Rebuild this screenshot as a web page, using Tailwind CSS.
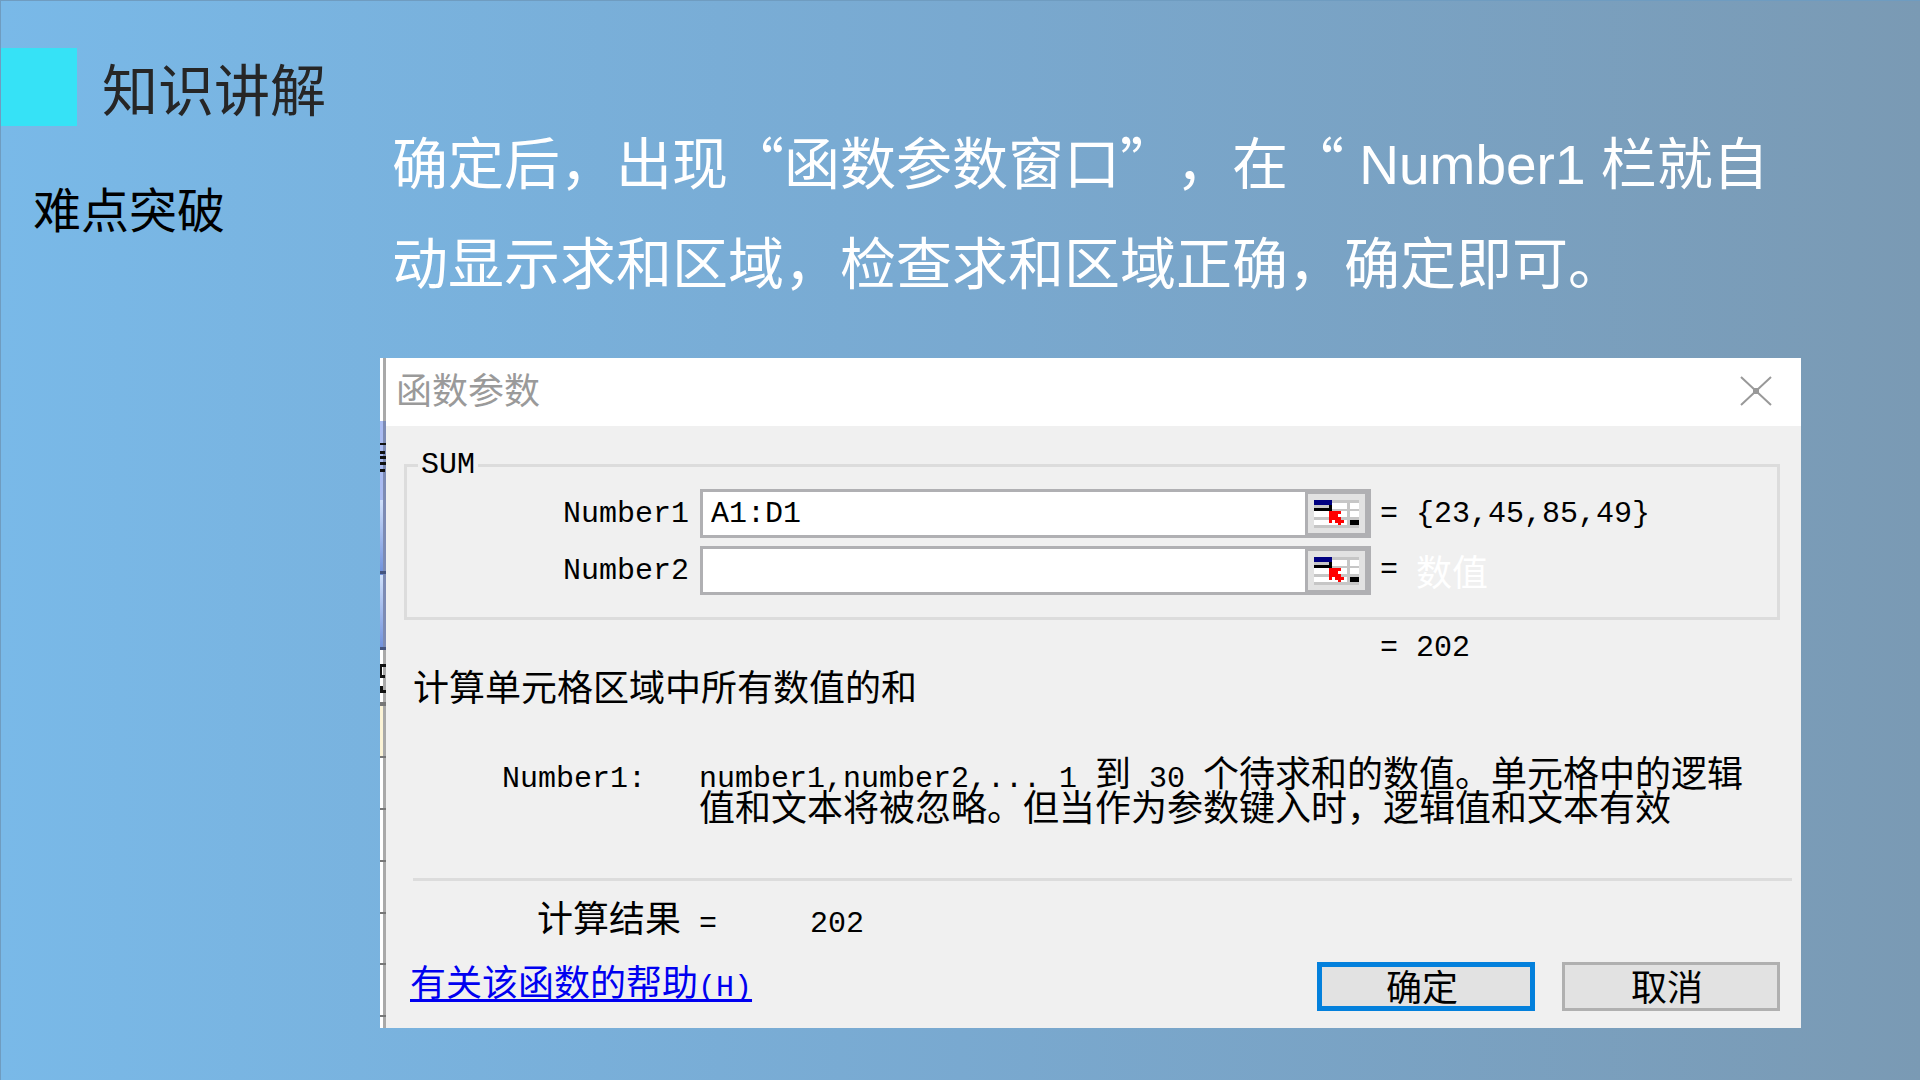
<!DOCTYPE html>
<html lang="zh-CN">
<head>
    <meta charset="UTF-8">
    <meta name="viewport" content="width=device-width, initial-scale=1.0">
    <title>知识讲解 - 难点突破</title>
    <script src="https://cdn.jsdelivr.net/npm/@tailwindcss/browser@4"></script>
</head>
<body class="font-['Noto_Sans_CJK_SC',sans-serif]">
    <main class="min-h-screen flex bg-linear-to-r from-[#79b9e8] via-[#79a9d0] to-[#7a9ab4] border-t border-l border-[#6f9cc0]">

        <!-- Left column -->
        <div class="w-[379px] shrink-0 pt-[47px]">
            <div class="flex items-center gap-[25px]">
                <div class="w-[76px] h-[78px] bg-[#36e2f6]"></div>
                <h1 class="text-[56px] leading-[78px] text-[#262626]">知识讲解</h1>
            </div>
            <h2 class="pl-8 mt-[45px] text-[48px] leading-[72px] text-black">难点突破</h2>
        </div>

        <!-- Right column -->
        <div class="flex-1 pt-[109px] pr-[119px]">
            <p class="pl-3 text-[56px] leading-[100px] text-white whitespace-nowrap [text-spacing-trim:space-all]">确定后，出现“函数参数窗口”，在“<span class="font-['Liberation_Sans',sans-serif] text-[55px] leading-none"> Number1 </span>栏就自<br>动显示求和区域，检查求和区域正确，确定即可。</p>

            <!-- Dialog -->
            <section class="mt-12 flex bg-[#f0f0f0] text-[36px] leading-9 text-black" aria-label="函数参数">
                <!-- Sheet edge behind the dialog -->
                <div class="relative w-[6px] shrink-0">
                    <svg class="absolute inset-0 w-full h-full" viewBox="0 0 6 670" preserveAspectRatio="none">
                        <defs>
                            <linearGradient id="cell" x1="0" y1="0" x2="0" y2="1">
                                <stop offset="0" stop-color="#cfe0fb"/>
                                <stop offset="1" stop-color="#6d8fdc"/>
                            </linearGradient>
                        </defs>
                        <rect width="6" height="670" fill="#fff"/>
                        <rect y="63" width="6" height="79" fill="#a9bbf2"/>
                        <rect y="142" width="6" height="75" fill="url(#cell)"/>
                        <rect y="217" width="6" height="75" fill="url(#cell)"/>
                        <rect y="345" width="3" height="53" fill="#fbf3d6"/>
                        <rect x="3" width="3" height="670" fill="#a9a9a9"/>
                        <rect x="3" y="63" width="3" height="229" fill="#7d8bb4"/>
                        <path fill="#111" d="M0 85h6v2H0zM0 93h5v3H0zM0 98h6v3H0zM0 104h6v3H0zM0 111h5v3H0zM0 306h6v3H2v8h3v3H0zM0 328h3v4h3v3H0z"/>
                        <path fill="#44547f" d="M0 213h6v3H0zM0 289h6v3H0z"/>
                        <path fill="#777" d="M0 344h6v4H0zM0 398h6v2H0zM0 450h6v2H0zM0 502h6v2H0zM0 554h6v2H0zM0 605h6v2H0zM0 657h6v2H0z"/>
                    </svg>
                </div>

                <div class="flex-1">
                    <div class="h-[68px] pl-[10px] pr-[29px] flex items-center justify-between bg-white text-[#9a9a9a]">
                        <span class="pb-2">函数参数</span>
                        <button type="button" aria-label="关闭">
                            <svg class="w-8 h-8" viewBox="0 0 32 32" fill="none" stroke="#999" stroke-width="2">
                                <path d="M1 1l30 28M31 1L1 29"/>
                                <path fill="#999" stroke="none" d="M13 12h6v6h-6z"/>
                            </svg>
                        </button>
                    </div>

                    <fieldset class="mt-6 ml-[18px] mr-[21px] pt-[9px] pb-[22px] border-3 border-[#dcdcdc]">
                        <legend class="ml-[11px] px-[3px] font-['Liberation_Mono',monospace] text-[30px] leading-[30px]">SUM</legend>
                        <div class="flex flex-col gap-2">
                            <div class="flex items-center">
                                <label for="number1" class="w-[293px] pl-[156px] font-['Liberation_Mono',monospace] text-[30px]">Number1</label>
                                <input id="number1" type="text" value="A1:D1" class="flex-1 min-w-0 h-[49px] pl-2 bg-white border-3 border-r-0 border-[#b0b0b3] font-['Liberation_Mono',monospace] text-[30px]">
                                <button type="button" aria-label="选择 Number1 区域" class="w-[66px] h-[49px] flex items-center justify-center bg-[#e2e2e2] border-y-5 border-l-3 border-r-6 border-[#b0b0b3]">
                                    <svg class="w-[45px] h-[28px]" viewBox="0 0 45 28">
                                        <path fill="#c6c6c6" d="M0 0h45v28H0z"/>
                                        <path fill="#fff" d="M18 3h15v6H18zM36 3h9v6h-9zM0 11h15v6H0zM18 11h15v6H18zM36 11h9v6h-9zM0 20h33v5H0z"/>
                                        <path fill="#000080" d="M0 0h18v5H0z"/>
                                        <path fill="#000" d="M0 8h15V5h3v6H0zM36 20h9v5h-9z"/>
                                        <path fill="#f00" d="M15 11h12v3h-3v3h3v3h3v3h-3v2h-3v-2h-3v-3h-3v3h-3z"/>
                                    </svg>
                                </button>
                                <output class="w-[406px] pl-[9px] flex gap-[18px] font-['Liberation_Mono',monospace] text-[30px]"><span>=</span><span>{23,45,85,49}</span></output>
                            </div>
                            <div class="flex items-center">
                                <label for="number2" class="w-[293px] pl-[156px] font-['Liberation_Mono',monospace] text-[30px]">Number2</label>
                                <input id="number2" type="text" class="flex-1 min-w-0 h-[49px] pl-2 bg-white border-3 border-r-0 border-[#b0b0b3] font-['Liberation_Mono',monospace] text-[30px]">
                                <button type="button" aria-label="选择 Number2 区域" class="w-[66px] h-[49px] flex items-center justify-center bg-[#e2e2e2] border-y-5 border-l-3 border-r-6 border-[#b0b0b3]">
                                    <svg class="w-[45px] h-[28px]" viewBox="0 0 45 28">
                                        <path fill="#c6c6c6" d="M0 0h45v28H0z"/>
                                        <path fill="#fff" d="M18 3h15v6H18zM36 3h9v6h-9zM0 11h15v6H0zM18 11h15v6H18zM36 11h9v6h-9zM0 20h33v5H0z"/>
                                        <path fill="#000080" d="M0 0h18v5H0z"/>
                                        <path fill="#000" d="M0 8h15V5h3v6H0zM36 20h9v5h-9z"/>
                                        <path fill="#f00" d="M15 11h12v3h-3v3h3v3h3v3h-3v2h-3v-2h-3v-3h-3v3h-3z"/>
                                    </svg>
                                </button>
                                <output class="w-[406px] pl-[9px] pb-[2px] flex items-center gap-[18px]"><span class="font-['Liberation_Mono',monospace] text-[30px]">=</span><span class="text-white">数值</span></output>
                            </div>
                        </div>
                    </fieldset>

                    <div class="mt-[10px] mr-[21px] flex justify-end">
                        <output class="w-[400px] flex gap-[18px] font-['Liberation_Mono',monospace] text-[30px]"><span>=</span><span>202</span></output>
                    </div>

                    <p class="mt-px pl-[27px]">计算单元格区域中所有数值的和</p>

                    <div class="mt-[51px] flex items-baseline leading-[34px] [text-spacing-trim:space-all]">
                        <span class="w-[313px] shrink-0 pl-[116px] font-['Liberation_Mono',monospace] text-[30px] leading-4">Number1:</span>
                        <p class="whitespace-nowrap"><span class="font-['Liberation_Mono',monospace] text-[30px] leading-4">number1,number2,... 1 </span>到<span class="font-['Liberation_Mono',monospace] text-[30px] leading-4"> 30 </span>个待求和的数值。单元格中的逻辑<br>值和文本将被忽略。但当作为参数键入时，逻辑值和文本有效</p>
                    </div>

                    <hr class="mt-14 ml-[27px] mr-[9px] border-t-3 border-[#dcdcdc]">

                    <div class="mt-[17px] pl-[151px] flex items-baseline">
                        <span class="w-[162px]">计算结果</span>
                        <span class="w-[111px] font-['Liberation_Mono',monospace] text-[30px] leading-4">=</span>
                        <output class="font-['Liberation_Mono',monospace] text-[30px] leading-4">202</output>
                    </div>

                    <div class="mt-7 pl-6 pr-[21px] pb-[17px] flex justify-between">
                        <a href="#" class="self-start leading-9 text-[#0000f0] underline decoration-3 underline-offset-3 [text-decoration-skip-ink:none]">有关该函数的帮助<span class="font-['Liberation_Mono',monospace] text-[30px] leading-4">(H)</span></a>
                        <div class="flex gap-[27px]">
                            <button type="button" class="w-[218px] h-[49px] pb-1 pr-2 flex items-center justify-center bg-[#e2e2e2] border-5 border-[#0380dc]">确定</button>
                            <button type="button" class="w-[218px] h-[49px] pb-1 pr-2 flex items-center justify-center bg-[#e2e2e2] border-3 border-[#b0b0b0]">取消</button>
                        </div>
                    </div>
                </div>
            </section>
        </div>
    </main>
</body>
</html>
